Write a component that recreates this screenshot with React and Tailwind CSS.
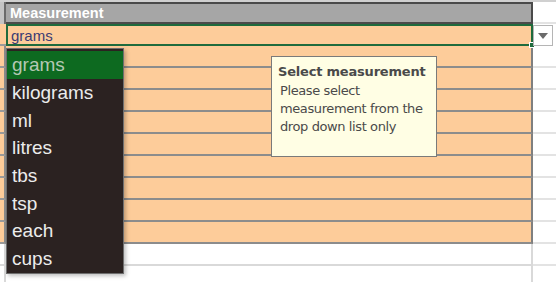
import { useState } from 'react'

const units = ['grams', 'kilograms', 'ml', 'litres', 'tbs', 'tsp', 'each', 'cups']

function Row({ fill = 'orange' }) {
  const orange = fill === 'orange'
  return (
    <div className="flex h-[22px]">
      <div
        className={`w-[6px] border-b-2 border-r-2 ${
          orange ? 'bg-[#fdcc9a] border-b-[#9a9a9a] border-r-[#8c8c8c]' : 'bg-white border-b-[#d9d9d9] border-r-[#d9d9d9]'
        }`}
      />
      <div
        className={`w-[527px] border-b-2 border-r-2 ${
          orange ? 'bg-[#fdcc9a] border-b-[#8c8c8c] border-r-[#7f7f7f]' : 'bg-white border-b-[#d9d9d9] border-r-[#d9d9d9]'
        }`}
      />
      <div className="flex-1 bg-white border-b-2 border-[#e3e3e3]" />
    </div>
  )
}

export default function App() {
  const [sel] = useState('grams')
  return (
    <div className="relative w-[556px] h-[282px] overflow-hidden bg-white font-['Liberation_Sans',Arial,sans-serif]">
      {/* header */}
      <div className="flex h-[24px] border-t-2 border-[#d0d0d0]">
        <div className="w-[6px] bg-[#c4c4c4] border-r-2 border-[#6a6a6a]" />
        <div className="w-[527px] bg-[#a6a6a6] border-t-2 border-b-2 border-r-2 border-[#4a4a4a] flex items-center pl-[4px]">
          <span className="text-white font-bold text-[14.5px] leading-none">Measurement</span>
        </div>
        <div className="flex-1 bg-white border-b-2 border-[#e3e3e3]" />
      </div>

      {/* selected row */}
      <div className="flex h-[22px]">
        <div className="w-[6px] bg-[#fdcc9a] border-b-2 border-[#9a9a9a]" />
        <div className="w-[527px] bg-[#fdcc9a] border-2 border-[#1f6b3d] flex items-center pl-[3px] relative">
          <span className="text-[#3b3b73] text-[15px] leading-none">{sel}</span>
          <div className="absolute -right-[4px] -bottom-[4px] w-[6px] h-[6px] bg-[#1f6b3d] border border-white" />
        </div>
        <div className="flex-1 bg-white" />
      </div>

      {Array.from({ length: 9 }).map((_, i) => (
        <Row key={i} />
      ))}
      <Row fill="white" />
      <Row fill="white" />

      {/* dropdown button */}
      <div className="absolute left-[533px] top-[25px] w-[20px] h-[21px] bg-white border border-[#b5b5b5] flex items-center justify-center">
        <svg width="10" height="6" viewBox="0 0 10 6">
          <path d="M0 0 L10 0 L5 6 Z" fill="#6b6b6b" />
        </svg>
      </div>

      {/* dropdown list */}
      <div className="absolute left-[6px] top-[48px] w-[118px] h-[226px] bg-[#2b2221] border border-[#6e6e6e] pt-[2px] shadow-[2px_2px_4px_rgba(0,0,0,0.25)]">
        {units.map((u) => (
          <div
            key={u}
            className={`h-[27.7px] flex items-center pl-[5px] text-[19px] leading-none ${
              u === sel ? 'bg-[#0d6a20] text-[#b4c8b4]' : 'text-[#ececec]'
            }`}
          >
            {u}
          </div>
        ))}
      </div>

      {/* input message */}
      <div className="absolute left-[271px] top-[56px] w-[166px] h-[101px] bg-[#fffee4] border border-[#7a7a7a] px-[6px] pt-[7px] font-['DejaVu_Sans',Verdana,sans-serif] text-[#4a4a4a]">
        <div className="font-bold text-[13px] leading-[15px] tracking-[-0.2px]">Select measurement</div>
        <div className="pl-[2px] mt-[3px] text-[13px] leading-[18px] tracking-[-0.4px]">
          Please select
          <br />
          measurement from the
          <br />
          drop down list only
        </div>
      </div>
    </div>
  )
}
